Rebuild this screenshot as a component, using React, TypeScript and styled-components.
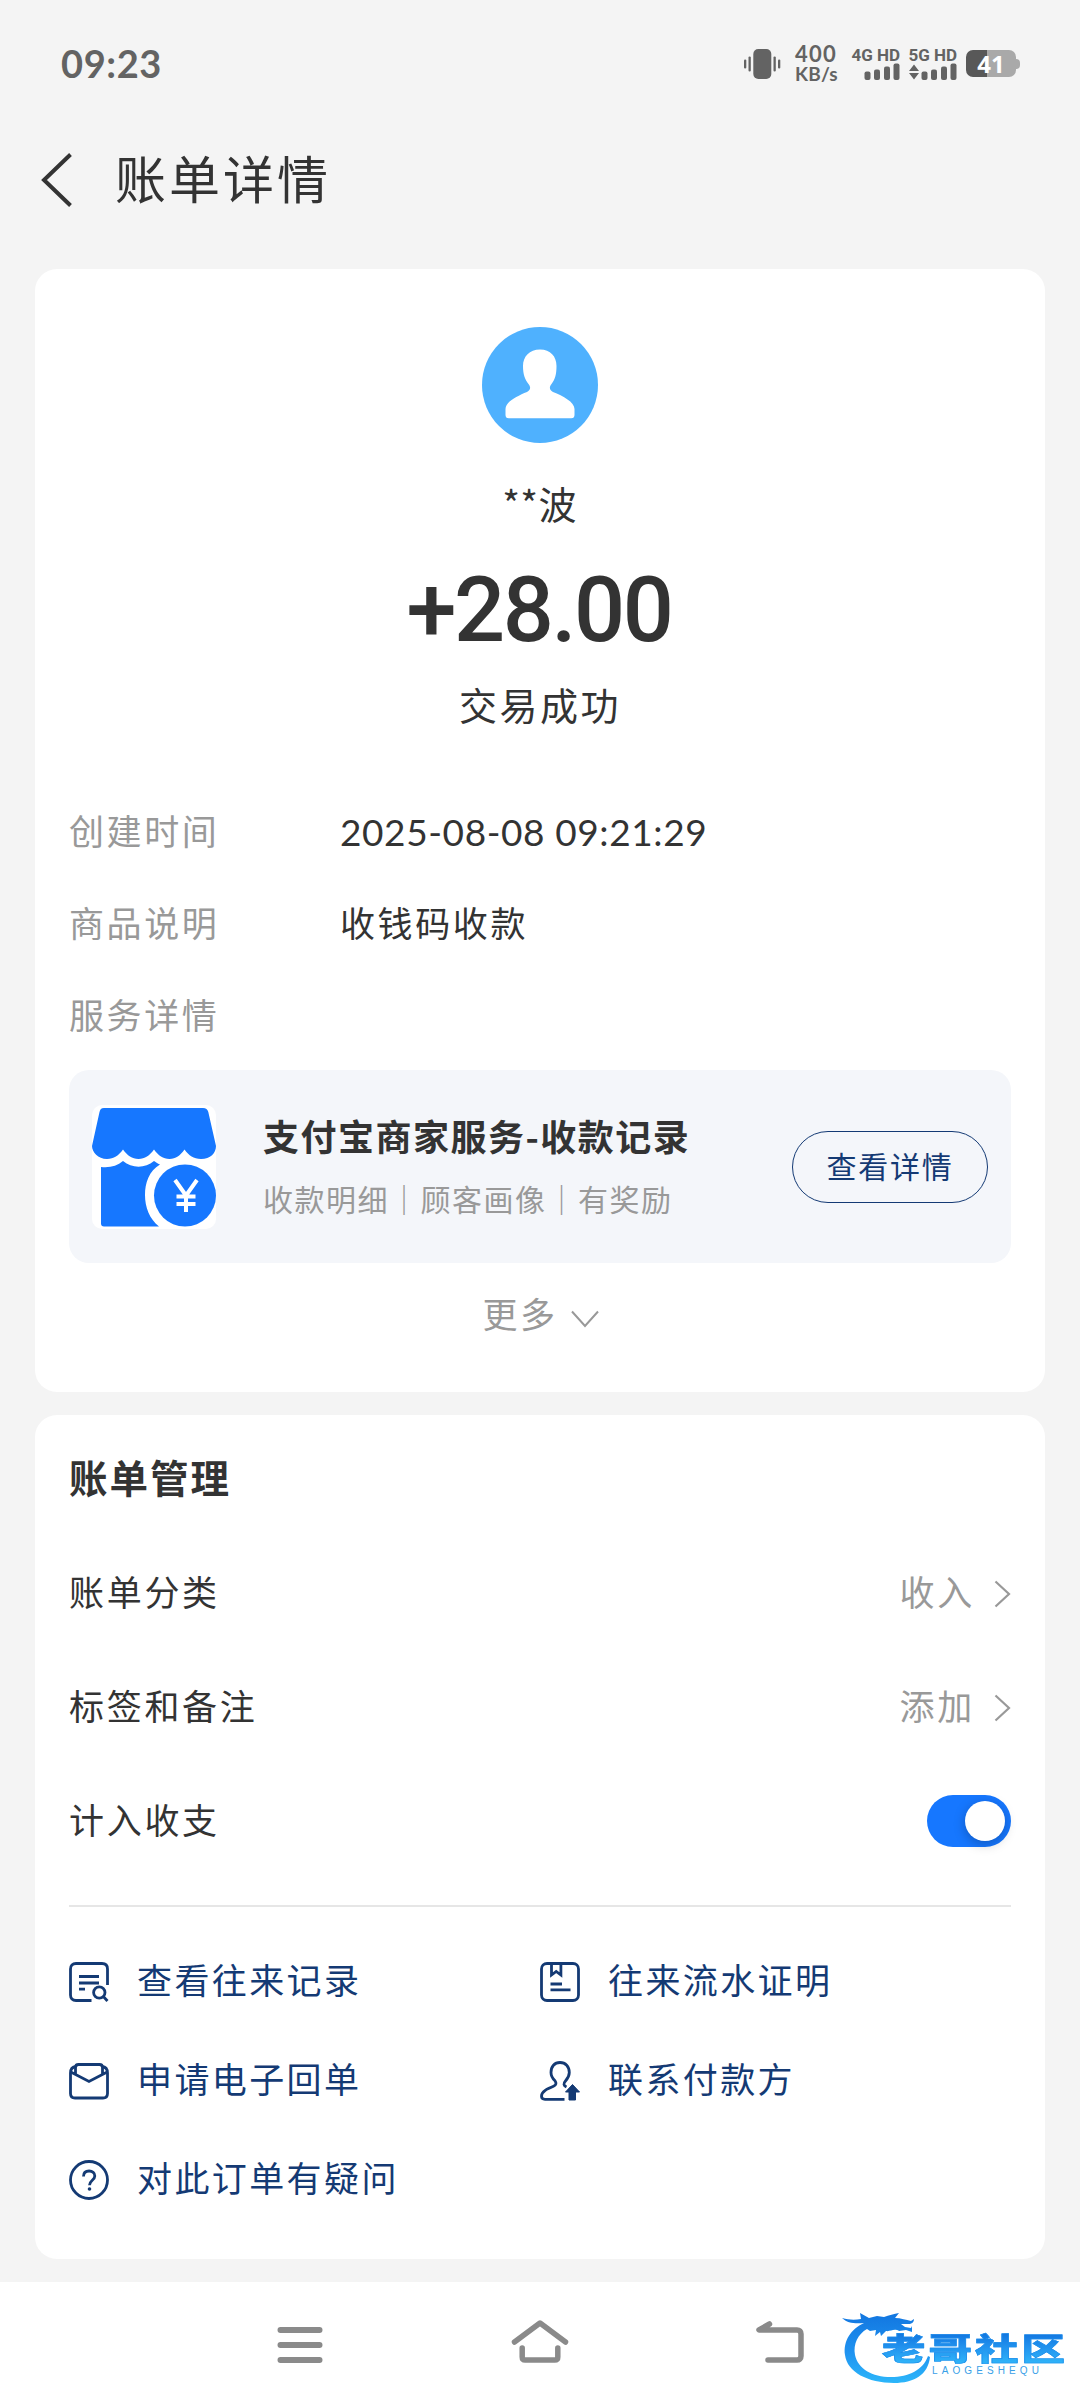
import React from "react";
import styled, { createGlobalStyle } from "styled-components";

const CJK = `"Noto Sans CJK SC", "Noto Sans", sans-serif`;
const LATIN = `Lato, "Noto Sans CJK SC", sans-serif`;
const NAVY = "#143a74";
const INK = "#333333";
const MUTED = "#999999";
const STATUS = "#636363";

const GlobalStyle = createGlobalStyle`
  * { box-sizing: border-box; }
  html, body { margin: 0; padding: 0; background: #f4f4f4; }
  body { font-family: ${CJK}; color: ${INK}; }
`;

const Screen = styled.div`
  position: relative;
  width: 1080px;
  height: 2408px;
  background: #f4f4f4;
  display: flex;
  flex-direction: column;
  overflow: hidden;
`;

/* ---------- status bar ---------- */
const StatusBar = styled.header`
  height: 122px;
  padding: 5px 60px 0 61px;
  display: flex;
  justify-content: space-between;
  align-items: center;
  color: ${STATUS};
`;
const Clock = styled.div`
  font: 700 38px/40px ${LATIN};
  letter-spacing: 0.6px;
  padding-bottom: 2px;
`;
const StatusIcons = styled.div`
  display: flex;
  align-items: center;
  height: 40px;
`;
const Speed = styled.div`
  display: flex;
  flex-direction: column;
  align-items: flex-start;
  width: 44px;
  margin: 0 13px 0 14px;
`;
const SpeedValue = styled.span`
  font: 700 22px/20px ${LATIN};
  letter-spacing: 1.2px;
`;
const SpeedUnit = styled.span`
  font: 700 19px/19px ${LATIN};
  letter-spacing: 0.2px;
`;
const Signal = styled.div<{ $gap: number }>`
  display: flex;
  flex-direction: column;
  align-items: flex-end;
  width: 48px;
  margin-right: ${(p) => p.$gap}px;
`;
const SignalLabel = styled.span`
  font: 700 17px/16px Roboto, sans-serif;
  white-space: nowrap;
`;
const Battery = styled.div`
  display: flex;
  align-items: center;
`;
const BatteryBody = styled.div`
  width: 50px;
  height: 27px;
  border-radius: 7px;
  background: linear-gradient(90deg, #585858 0 21px, #a9a9a9 21px);
  color: #fff;
  display: flex;
  align-items: center;
  justify-content: center;
  font: 700 24px/27px "Open Sans", sans-serif;
`;
const BatteryCap = styled.div`
  width: 4px;
  height: 10px;
  border-radius: 0 4px 4px 0;
  background: #a9a9a9;
`;

/* ---------- page header ---------- */
const PageHeader = styled.div`
  height: 147px;
  padding: 0 0 38px 39px;
  display: flex;
  align-items: center;
  svg { margin-top: 6px; }
`;
const PageTitle = styled.h1`
  margin: 0 0 0 40px;
  font-size: 51px;
  line-height: 70px;
  font-weight: 400;
  letter-spacing: 3px;
`;

/* ---------- cards ---------- */
const Card = styled.section<{ $height: number }>`
  flex: none;
  height: ${(p) => p.$height}px;
  margin: 0 35px 23px;
  padding: 0 34px;
  background: #fff;
  border-radius: 22px;
  display: flex;
  flex-direction: column;
`;
const Summary = styled.div`
  padding-top: 58px;
  display: flex;
  flex-direction: column;
  align-items: center;
`;
const Payer = styled.div`
  margin-top: 33px;
  font-size: 38px;
  line-height: 54px;
  letter-spacing: 0.4px;
  padding-right: 1px;
`;
const Amount = styled.div`
  margin: 31px 2px -1px 0;
  font: 500 90px/100px Roboto, sans-serif;
  letter-spacing: -2.4px;
`;
const State = styled.div`
  margin-top: 19px;
  font-size: 38px;
  line-height: 50px;
  letter-spacing: 2.5px;
`;
const Details = styled.dl`
  margin: 55px 0 10px;
`;
const DetailRow = styled.div`
  height: 92px;
  display: flex;
  align-items: center;
  font-size: 35px;
  line-height: 50px;
  letter-spacing: 2.6px;
`;
const DetailLabel = styled.dt`
  width: 271px;
  color: ${MUTED};
`;
const DetailValue = styled.dd<{ $latin?: boolean }>`
  margin: 0;
  ${(p) => p.$latin && `padding-top: 3px; font: 400 37px/50px ${LATIN}; letter-spacing: 0.6px;`}
`;

const Service = styled.div`
  height: 193px;
  border-radius: 20px;
  background: #f4f6fa;
  display: flex;
  align-items: center;
  padding: 0 23px;
`;
const ServiceIcon = styled.div`
  width: 124px;
  height: 124px;
  border-radius: 10px;
  background: #fff;
  overflow: hidden;
`;
const ServiceText = styled.div`
  flex: 1;
  padding: 2px 0 0 47px;
  white-space: nowrap;
`;
const ServiceTitle = styled.div`
  font-size: 36px;
  line-height: 60px;
  font-weight: 700;
  letter-spacing: 1.5px;
`;
const ServiceNote = styled.div`
  font-size: 30px;
  line-height: 66px;
  letter-spacing: 1.5px;
  color: ${MUTED};
`;
const PillButton = styled.button`
  width: 196px;
  height: 72px;
  padding: 0 0 4px 0;
  border: 1.5px solid ${NAVY};
  border-radius: 36px;
  background: transparent;
  color: ${NAVY};
  font: 400 30px/40px ${CJK};
  letter-spacing: 1.7px;
`;
const More = styled.div`
  height: 98px;
  display: flex;
  align-items: center;
  justify-content: center;
  gap: 13px;
  padding-left: 1px;
  font-size: 35px;
  letter-spacing: 2.6px;
  color: ${MUTED};
  svg { margin-top: 13px; }
`;

const SectionTitle = styled.h2`
  margin: 4px 0 0;
  font-size: 38.5px;
  line-height: 114px;
  font-weight: 700;
  letter-spacing: 2px;
`;
const SettingRow = styled.div`
  height: 114px;
  display: flex;
  align-items: center;
  justify-content: space-between;
  font-size: 35px;
  letter-spacing: 2.7px;
`;
const SettingValue = styled.span`
  display: flex;
  align-items: center;
  gap: 19px;
  color: ${MUTED};
  svg { margin-top: 7px; }
`;
const Switch = styled.div`
  width: 84px;
  height: 52px;
  margin-top: 5px;
  padding: 6px;
  border-radius: 26px;
  background: #1677ff;
  display: flex;
  justify-content: flex-end;
`;
const Knob = styled.div`
  width: 40px;
  height: 40px;
  border-radius: 50%;
  background: #fff;
  box-shadow: 0 3px 12px rgba(0, 0, 0, 0.25);
`;
const Divider = styled.hr`
  width: 100%;
  height: 2px;
  margin: 30px 0 22px;
  border: 0;
  background: #e6e6e6;
`;
const Actions = styled.div`
  display: grid;
  grid-template-columns: 471px 471px;
  grid-auto-rows: 99px;
  align-items: center;
`;
const Action = styled.a`
  display: flex;
  align-items: center;
  gap: 28px;
  font-size: 35px;
  letter-spacing: 2.4px;
  color: ${NAVY};
  svg { margin-top: 6px; }
`;

/* ---------- bottom navigation ---------- */
const NavBar = styled.nav`
  flex: none;
  height: 126px;
  background: #fff;
  display: flex;
  align-items: flex-start;
  justify-content: space-between;
  padding: 35px 270px 0 270px;
`;

const Watermark = styled.div`
  position: absolute;
  left: 838px;
  top: 2308px;
  width: 230px;
  height: 80px;
`;
const WatermarkDragon = styled.svg`
  position: absolute;
  left: 0;
  top: 0;
`;
const WatermarkName = styled.div`
  position: absolute;
  left: 44px;
  top: 20px;
  font: 900 31px/38px ${CJK};
  letter-spacing: 2.2px;
  white-space: nowrap;
  color: transparent;
  background: linear-gradient(180deg, #1276e0 15%, #2192ee 50%, #2fb2f8 90%);
  -webkit-background-clip: text;
  background-clip: text;
  -webkit-text-stroke: 0.6px #1f8fec;
  transform: scaleX(1.4);
  transform-origin: 0 0;
`;
const WatermarkPinyin = styled.div`
  position: absolute;
  left: 94px;
  top: 58px;
  font: 400 10px/10px "Liberation Sans", sans-serif;
  letter-spacing: 4.1px;
  color: #3a9fe8;
`;

/* ---------- drawings ---------- */
const BackIcon = () => (
  <svg width="36" height="56" viewBox="0 0 36 56" fill="none" stroke={INK} strokeWidth="4">
    <path d="M31.5 2.5 5 28 31.5 53.500" strokeLinejoin="miter" />
  </svg>
);

const VibrateIcon = () => (
  <svg width="37" height="32" viewBox="0 0 37 32" fill={STATUS}>
    <rect x="9.300" y="1" width="18" height="30" rx="5" />
    <rect x="4.500" y="8.500" width="2.300" height="15" rx="1.100" />
    <rect x="0" y="11.500" width="2.300" height="9" rx="1.100" />
    <rect x="29.500" y="8.500" width="2.300" height="15" rx="1.100" />
    <rect x="34" y="11.500" width="2.300" height="9" rx="1.100" />
  </svg>
);

const BarsIcon = ({ arrows }: { arrows?: boolean }) => (
  <svg width="48" height="18" viewBox="0 0 48 18" fill={STATUS}>
    {arrows && <path d="M5 1.500 10 8H0ZM5 16.500 10 10H0Z" />}
    <rect x="12.500" y="8.500" width="6" height="8.500" rx="2" />
    <rect x="22" y="6.500" width="6" height="10.500" rx="2" />
    <rect x="32" y="3.500" width="6" height="13.500" rx="2" />
    <rect x="41.500" y="0.500" width="6" height="16.500" rx="2" />
  </svg>
);

const Avatar = () => (
  <svg width="116" height="116" viewBox="0 0 116 116">
    <circle cx="58" cy="58" r="58" fill="#4fb1fe" />
    <path
      fill="#fff"
      d="M58 22.500C47.500 22.500 41 29.500 41 39c0 8.500 2 13.500 5.500 18 2.500 3.200 2.200 5.800-1.500 8C35 69 23.500 75 23.500 82v6c0 2 1 3.300 3.300 3.300h62.400c2.300 0 3.300-1.300 3.300-3.300v-6c0-7-11.500-13-21.500-17-3.700-2.200-4-4.800-1.500-8C73 52.500 74.500 47.500 74.500 39 74.500 29.500 68.500 22.500 58 22.500Z"
    />
  </svg>
);

const ShopIcon = () => (
  <svg width="124" height="124" viewBox="0 0 124 124">
    <path
      fill="#1677ff"
      d="M12 3h99c3 0 4.500 1.500 5.300 4L124 41c0 7-5.500 13-15 13-7.500 0-12-3.500-16.500-9.500C88 50.500 84 54 77.500 54S66.500 50.500 62 44.500C57.500 50.500 53 54 46.500 54S35.500 50.500 31 44.500C26.500 50.500 22 54 15 54 6 54 0 47 0 41L7.500 7C8.300 4.500 9 3 12 3Z"
    />
    <path
      fill="#1677ff"
      d="M9 62c9 1 16-1 22-6 9 7.500 22 7.500 31 0 1.500 1 3.500 2.500 6 3.500C57 66 53 78 53 90c0 12 4.500 24 14 31.500H12c-2 0-3-1-3-3Z"
    />
    <circle cx="93" cy="90.500" r="31" fill="#1677ff" />
    <path
      d="M83 75 94 90.500 105 75M94 90v17M84.500 91.500h19M84.500 99h19"
      fill="none"
      stroke="#fff"
      strokeWidth="4"
    />
  </svg>
);

const ChevronDown = () => (
  <svg width="28" height="18" viewBox="0 0 28 18" fill="none" stroke={MUTED} strokeWidth="2">
    <path d="M1 1.500 14 16 27 1.500" />
  </svg>
);

const ChevronRight = () => (
  <svg width="17" height="28" viewBox="0 0 17 28" fill="none" stroke={MUTED} strokeWidth="2.200">
    <path d="M1.500 1.500 15 14 1.500 26.500" />
  </svg>
);

const iconProps = {
  width: 40,
  height: 40,
  viewBox: "0 0 40 40",
  fill: "none",
  stroke: NAVY,
  strokeWidth: 2.8,
} as const;

const RecordIcon = () => (
  <svg {...iconProps}>
    <path d="M22.500 38.500H7c-3.500 0-5.500-2-5.500-5.500V7C1.500 3.500 3.500 1.500 7 1.500h26c3.500 0 5.500 2 5.500 5.500v16" />
    <path d="M10 14.500h20M10 21h20M10 27.200h6" />
    <circle cx="30.300" cy="30.500" r="5.700" />
    <path d="m34.300 34.500 4.200 4.500" />
  </svg>
);
const ProofIcon = () => (
  <svg {...iconProps}>
    <rect x="1.500" y="1.500" width="37" height="37" rx="5.500" />
    <path d="M11.500 2v11l4.700-3.500 4.700 3.500V2M10.500 22H22M10.500 27.800h20" />
  </svg>
);
const EnvelopeIcon = () => (
  <svg {...iconProps}>
    <path d="M7 5.500C2.500 6 1.500 9 1.500 12v20.500c0 3 1.500 4.500 4.500 4.500h28c3 0 4.500-1.500 4.500-4.500V12c0-3-1-6-5.500-6.500" />
    <path d="M6.500 12.500V6.500c0-2 1-3 3-3h21c2 0 3 1 3 3v6M1.800 11 20 20.500 38.200 11" />
  </svg>
);
const ContactIcon = () => (
  <svg {...iconProps}>
    <path d="M24.500 38.300H5c-2.500 0-3.500-1-3.500-3 0-5 6-7.500 12-10 3-1.300 3-3.500 1.500-5.500C12 17 11 14 11 11.500 11 5.500 14.500 1.500 20 1.500s9.300 4 9.300 10c0 3-1.500 6-4 8.700-2.100 2.300-1.800 4.300 1.200 5.800" />
    <path d="m32.500 23.500 7 7.500h-4v8h-6.500v-8H25.500Z" fill={NAVY} strokeWidth="1" />
  </svg>
);
const HelpIcon = () => (
  <svg {...iconProps}>
    <circle cx="20" cy="20" r="18.500" />
    <path d="M14.500 16.500c0-3.500 2.300-5.500 5.600-5.500s5.700 2 5.700 5c0 4.200-5.300 4.500-5.300 9.300" />
    <circle cx="20.500" cy="29" r="1.800" fill={NAVY} stroke="none" />
  </svg>
);

const navProps = {
  height: 60,
  fill: "none",
  stroke: "#8a8a8a",
  strokeWidth: 6,
  strokeLinecap: "round",
  strokeLinejoin: "round",
} as const;

const MenuIcon = () => (
  <svg {...navProps} width={60} viewBox="0 0 60 60">
    <path d="M10.500 13h39M10.500 28h39M10.500 43h39" />
  </svg>
);
const HomeIcon = () => (
  <svg {...navProps} width={60} viewBox="0 0 60 60">
    <path d="M4.500 25 30 6 55.500 25" strokeWidth="5.500" />
    <path d="M12.200 31v9c0 2 1 3 3 3h29.600c2 0 3-1 3-3v-9" strokeWidth="5.500" />
  </svg>
);
const ReturnIcon = () => (
  <svg {...navProps} width={60} viewBox="0 0 60 60">
    <path d="M19.500 7 9 13h38c2.500 0 4 1.500 4 4v22c0 2.500-1.500 4-4 4H18" strokeWidth="5.500" />
  </svg>
);

const Dragon = () => (
  <WatermarkDragon width="120" height="80" viewBox="0 0 120 80">
    <defs>
      <linearGradient id="dragonFill" x1="0" y1="0" x2="0" y2="1">
        <stop offset="0" stopColor="#1276e0" />
        <stop offset="0.55" stopColor="#1f92f0" />
        <stop offset="1" stopColor="#2cb6fa" />
      </linearGradient>
    </defs>
    <path
      fill="url(#dragonFill)"
      d="M4 10c7 2 13 2 19 1l-1-6 9 5 8-2 7 1c5-2 10-3 15-4l-4 5c6 0 11 2 16 3l3-2c0 3-2 5-6 5h-7l4 3 6 1 1-2v6l-6-2-7 1c-5-3-9 1-13 0l-5 5-1-4-5 4 1-6-6 1-3-2C20 26 15 36 17 47c3 14 17 22 36 22 18 0 32-7 37-21l2 1C90 67 76 75 56 75 30 75 9 64 7 47 5 33 13 21 26 15 17 16 9 15 4 10Z"
    />
  </WatermarkDragon>
);

const details = [
  { label: "创建时间", value: "2025-08-08 09:21:29", latin: true },
  { label: "商品说明", value: "收钱码收款" },
  { label: "服务详情", value: "" },
];

const actions = [
  { text: "查看往来记录", Icon: RecordIcon },
  { text: "往来流水证明", Icon: ProofIcon },
  { text: "申请电子回单", Icon: EnvelopeIcon },
  { text: "联系付款方", Icon: ContactIcon },
  { text: "对此订单有疑问", Icon: HelpIcon },
];

export default function App() {
  return (
    <>
      <GlobalStyle />
      <Screen>
        <StatusBar>
          <Clock>09:23</Clock>
          <StatusIcons>
            <VibrateIcon />
            <Speed>
              <SpeedValue>400</SpeedValue>
              <SpeedUnit>KB/s</SpeedUnit>
            </Speed>
            <Signal $gap={9}>
              <SignalLabel>4G HD</SignalLabel>
              <BarsIcon />
            </Signal>
            <Signal $gap={9}>
              <SignalLabel>5G HD</SignalLabel>
              <BarsIcon arrows />
            </Signal>
            <Battery>
              <BatteryBody>41</BatteryBody>
              <BatteryCap />
            </Battery>
          </StatusIcons>
        </StatusBar>

        <PageHeader>
          <BackIcon />
          <PageTitle>账单详情</PageTitle>
        </PageHeader>

        <Card $height={1123}>
          <Summary>
            <Avatar />
            <Payer>**波</Payer>
            <Amount>+28.00</Amount>
            <State>交易成功</State>
          </Summary>
          <Details>
            {details.map((d) => (
              <DetailRow key={d.label}>
                <DetailLabel>{d.label}</DetailLabel>
                <DetailValue $latin={d.latin}>{d.value}</DetailValue>
              </DetailRow>
            ))}
          </Details>
          <Service>
            <ServiceIcon>
              <ShopIcon />
            </ServiceIcon>
            <ServiceText>
              <ServiceTitle>支付宝商家服务-收款记录</ServiceTitle>
              <ServiceNote>收款明细｜顾客画像｜有奖励</ServiceNote>
            </ServiceText>
            <PillButton>查看详情</PillButton>
          </Service>
          <More>
            更多
            <ChevronDown />
          </More>
        </Card>

        <Card $height={844}>
          <SectionTitle>账单管理</SectionTitle>
          <SettingRow>
            账单分类
            <SettingValue>
              收入
              <ChevronRight />
            </SettingValue>
          </SettingRow>
          <SettingRow>
            标签和备注
            <SettingValue>
              添加
              <ChevronRight />
            </SettingValue>
          </SettingRow>
          <SettingRow>
            计入收支
            <Switch>
              <Knob />
            </Switch>
          </SettingRow>
          <Divider />
          <Actions>
            {actions.map(({ text, Icon }) => (
              <Action key={text}>
                <Icon />
                {text}
              </Action>
            ))}
          </Actions>
        </Card>

        <NavBar>
          <MenuIcon />
          <HomeIcon />
          <ReturnIcon />
        </NavBar>

        <Watermark>
          <Dragon />
          <WatermarkName>老哥社区</WatermarkName>
          <WatermarkPinyin>LAOGESHEQU</WatermarkPinyin>
        </Watermark>
      </Screen>
    </>
  );
}
